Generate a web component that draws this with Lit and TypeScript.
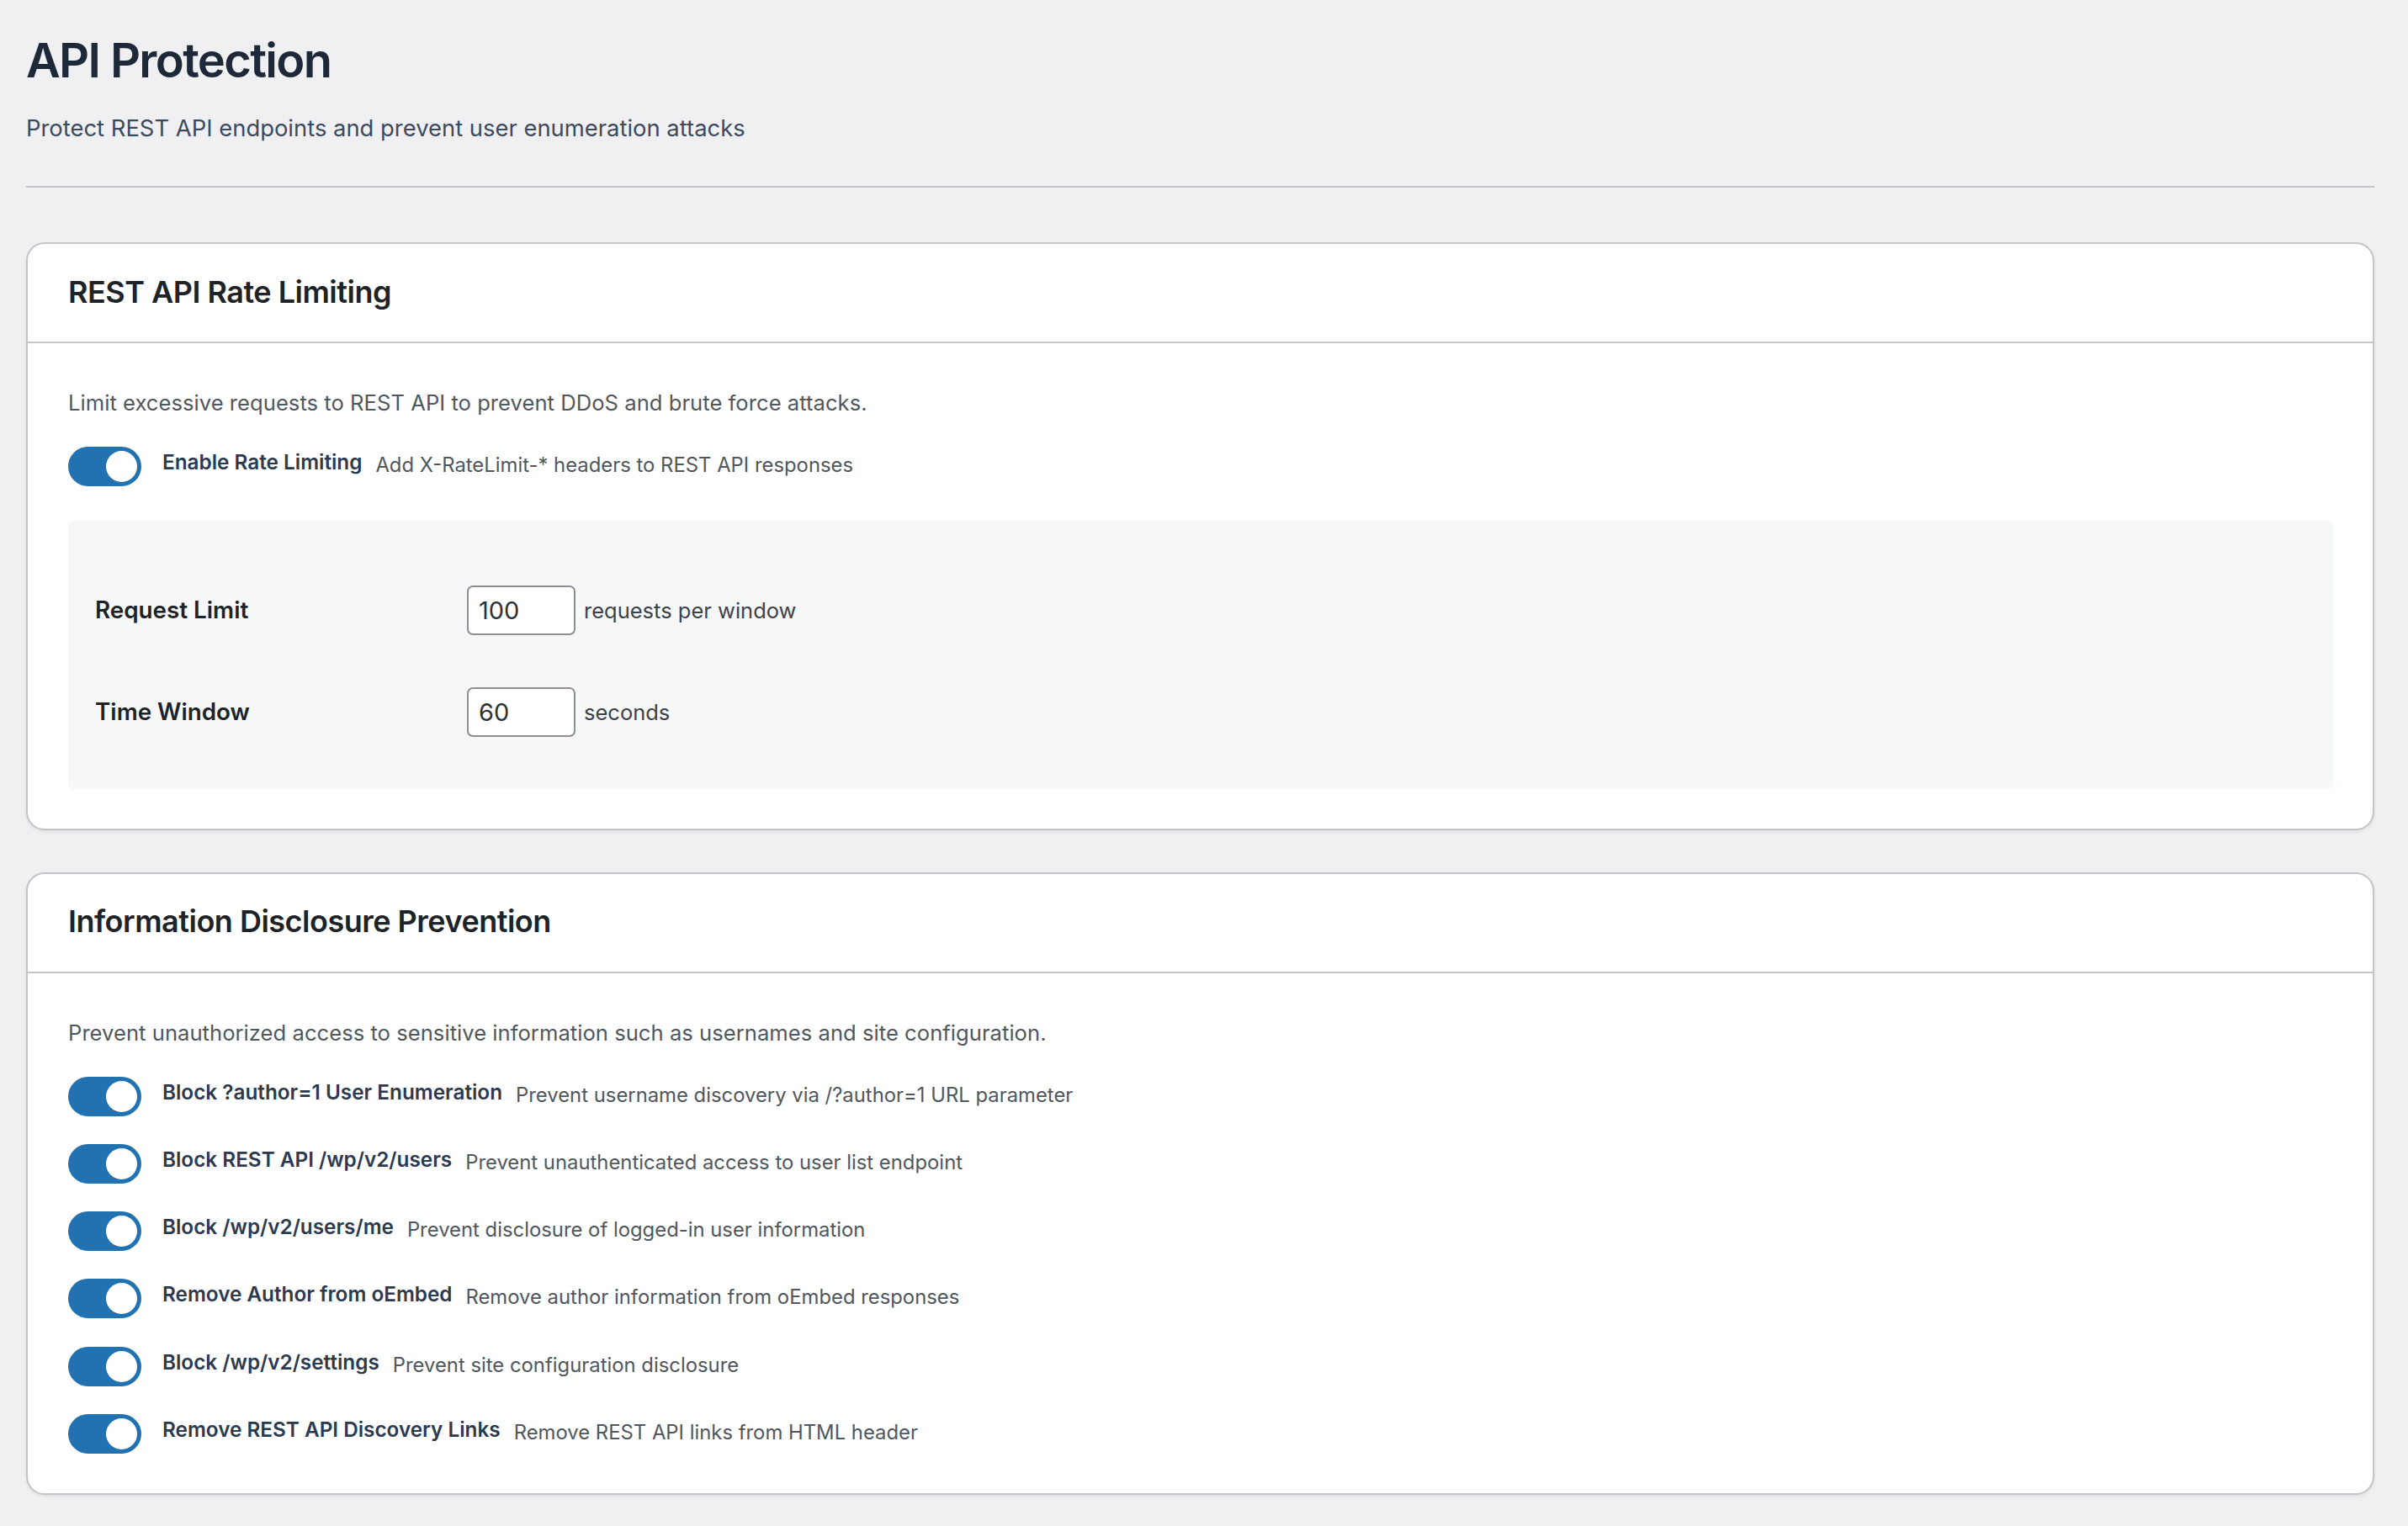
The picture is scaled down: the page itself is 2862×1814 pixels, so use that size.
import { LitElement, html, css } from 'lit';
import { customElement } from 'lit/decorators.js';

const disclosureRows = [
  { label: 'Block ?author=1 User Enumeration', desc: 'Prevent username discovery via /?author=1 URL parameter' },
  { label: 'Block REST API /wp/v2/users', desc: 'Prevent unauthenticated access to user list endpoint' },
  { label: 'Block /wp/v2/users/me', desc: 'Prevent disclosure of logged-in user information' },
  { label: 'Remove Author from oEmbed', desc: 'Remove author information from oEmbed responses' },
  { label: 'Block /wp/v2/settings', desc: 'Prevent site configuration disclosure' },
  { label: 'Remove REST API Discovery Links', desc: 'Remove REST API links from HTML header' },
];

@customElement('app-root')
export class AppRoot extends LitElement {
  static styles = css`
    :host {
      display: block;
      min-height: 1814px;
      background: #f0f0f2;
      font-family: Inter, "Noto Sans", sans-serif;
      color: #1d2327;
    }
    .page {
      padding: 37px 40px 0 31px;
    }
    h1 {
      margin: 0;
      font-size: 56px;
      line-height: 70px;
      font-weight: 600;
      letter-spacing: -1.65px;
      color: #1d2939;
    }
    .subtitle {
      margin: 25px 0 0;
      font-size: 27.4px;
      line-height: 40px;
      color: #3c4a5e;
    }
    hr {
      margin: 49px 0 0;
      border: 0;
      border-top: 2px solid #c3c4c7;
    }
    .card {
      margin-top: 65px;
      background: #fff;
      border: 2px solid #c3c4c7;
      border-radius: 22px;
      box-shadow: 0 2px 4px rgba(0, 0, 0, 0.07);
    }
    .card + .card {
      margin-top: 50px;
    }
    .card-head {
      box-sizing: border-box;
      height: 118px;
      padding: 0 0 3px 48px;
      display: flex;
      align-items: center;
      border-bottom: 2px solid #c3c4c7;
    }
    h2 {
      margin: 0;
      font-size: 36px;
      font-weight: 600;
      letter-spacing: -0.5px;
      color: #1d2327;
    }
    .card-body {
      padding: 51px 47px 47px 48px;
    }
    .intro {
      margin: 0 0 32px;
      font-size: 25.6px;
      line-height: 40px;
      letter-spacing: 0.03px;
      color: #50575e;
    }
    .toggle-row {
      display: flex;
      align-items: flex-start;
      height: 47px;
      margin-bottom: 33.3px;
    }
    .toggle-row:last-child {
      margin-bottom: 0;
    }
    .switch {
      position: relative;
      flex: none;
      width: 87px;
      height: 47px;
      border-radius: 24px;
      background: #2271b1;
    }
    .switch::after {
      content: '';
      position: absolute;
      right: 5px;
      top: 5px;
      width: 37px;
      height: 37px;
      border-radius: 50%;
      background: #fff;
    }
    .toggle-label {
      margin-left: 25px;
      font-size: 24.3px;
      line-height: 36px;
      font-weight: 600;
      color: #2c3a50;
    }
    .toggle-desc {
      margin: 4px 0 0 16px;
      font-size: 23.85px;
      line-height: 36px;
      color: #50575e;
    }
    .settings {
      margin-top: 40.5px;
      padding: 77px 32px 62px;
      background: #f6f7f7;
      border-radius: 7px;
    }
    .field {
      display: flex;
      align-items: center;
      height: 59px;
      margin-bottom: 62px;
    }
    .field:last-child {
      margin-bottom: 0;
    }
    .field-name {
      width: 442px;
      font-size: 27.8px;
      font-weight: 600;
      color: #1d2327;
    }
    .input {
      box-sizing: border-box;
      width: 129px;
      height: 59px;
      padding: 0 12px;
      display: flex;
      align-items: center;
      background: #fff;
      border: 2px solid #8c8f94;
      border-radius: 7px;
      font-size: 29px;
      color: #2c3338;
    }
    .unit {
      margin-left: 10px;
      font-size: 25.5px;
      color: #3c434a;
    }
  `;

  private renderToggle(label: string, desc: string) {
    return html`
      <div class="toggle-row">
        <span class="switch"></span>
        <span class="toggle-label">${label}</span>
        <span class="toggle-desc">${desc}</span>
      </div>
    `;
  }

  render() {
    return html`
      <div class="page">
        <h1>API Protection</h1>
        <p class="subtitle">Protect REST API endpoints and prevent user enumeration attacks</p>
        <hr />
        <section class="card">
          <div class="card-head"><h2>REST API Rate Limiting</h2></div>
          <div class="card-body">
            <p class="intro">Limit excessive requests to REST API to prevent DDoS and brute force attacks.</p>
            ${this.renderToggle('Enable Rate Limiting', 'Add X-RateLimit-* headers to REST API responses')}
            <div class="settings">
              <div class="field">
                <span class="field-name">Request Limit</span>
                <span class="input">100</span>
                <span class="unit">requests per window</span>
              </div>
              <div class="field">
                <span class="field-name">Time Window</span>
                <span class="input">60</span>
                <span class="unit">seconds</span>
              </div>
            </div>
          </div>
        </section>
        <section class="card">
          <div class="card-head"><h2>Information Disclosure Prevention</h2></div>
          <div class="card-body">
            <p class="intro">Prevent unauthorized access to sensitive information such as usernames and site configuration.</p>
            ${disclosureRows.map(r => this.renderToggle(r.label, r.desc))}
          </div>
        </section>
      </div>
    `;
  }
}
